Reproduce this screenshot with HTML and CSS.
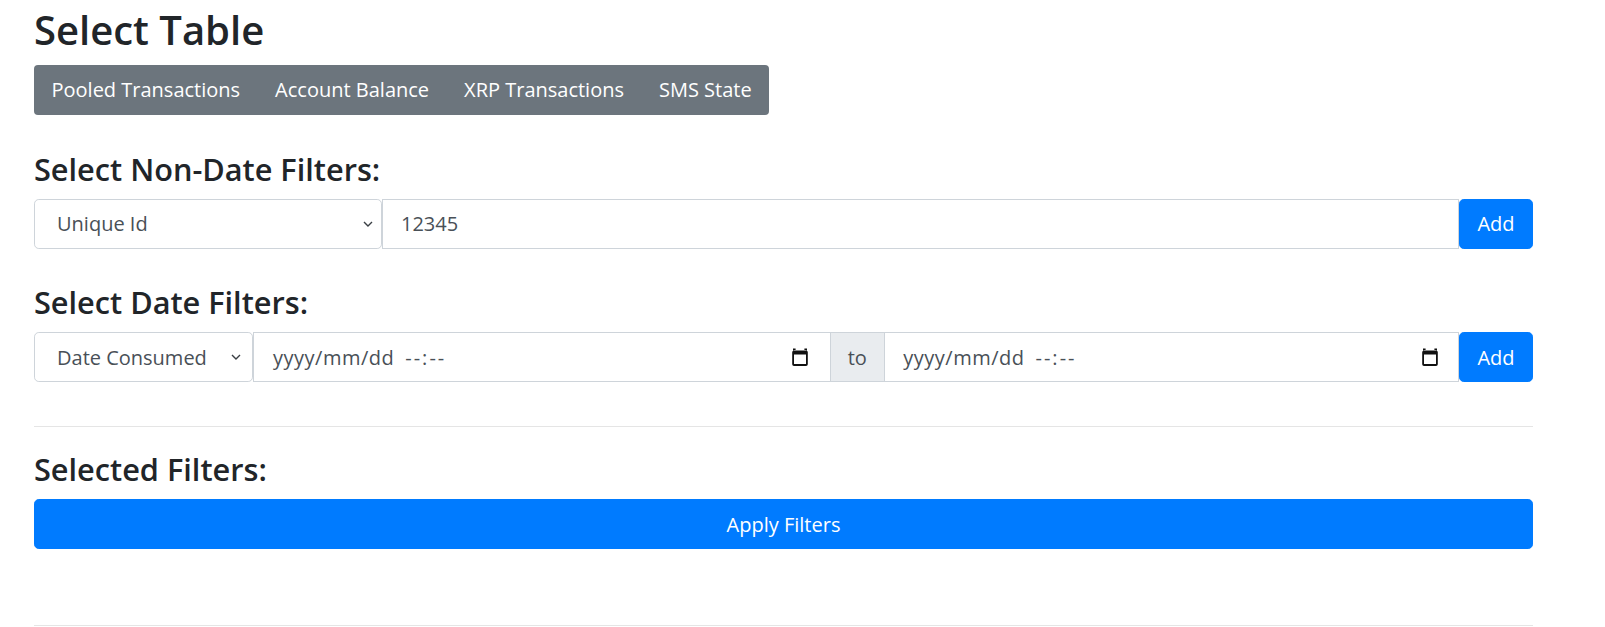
FILE: index.html
```html
<!DOCTYPE html>
<html lang="en">
<head>
<meta charset="utf-8">
<title>Select Table</title>
<link rel="stylesheet" href="styles.css">
</head>
<body>
<div class="page">
  <h1 class="title">Select Table</h1>
  <ul class="table-nav">
    <li><a href="#">Pooled Transactions</a></li>
    <li><a href="#">Account Balance</a></li>
    <li><a href="#">XRP Transactions</a></li>
    <li><a href="#">SMS State</a></li>
  </ul>

  <h3 class="section-title">Select Non-Date Filters:</h3>
  <div class="filter-row">
    <div class="select-wrap select-wide">
      <select class="form-select">
        <option>Unique Id</option>
      </select>
      <svg class="chev" width="10" height="6" viewBox="0 0 10 6"><path d="M1 1l4 4 4-4" fill="none" stroke="#3a3f44" stroke-width="1.4"/></svg>
    </div>
    <input class="text-input" type="text" value="12345">
    <button class="btn-add" type="button">Add</button>
  </div>

  <h3 class="section-title">Select Date Filters:</h3>
  <div class="filter-row">
    <div class="select-wrap select-narrow">
      <select class="form-select">
        <option>Date Consumed</option>
      </select>
      <svg class="chev" width="10" height="6" viewBox="0 0 10 6"><path d="M1 1l4 4 4-4" fill="none" stroke="#3a3f44" stroke-width="1.4"/></svg>
    </div>
    <div class="date-input date-first">
      <span class="date-text"><span class="date-part">yyyy/mm/dd</span><span class="time-part">--:--</span></span>
      <svg class="cal" width="16" height="18" viewBox="0 0 16 18"><path fill-rule="evenodd" d="M2 2.5h12a1.8 1.8 0 0 1 1.8 1.8v11.9a1.8 1.8 0 0 1-1.8 1.8H2a1.8 1.8 0 0 1-1.8-1.8V4.3A1.8 1.8 0 0 1 2 2.5zM2 6.6v9.4h12V6.6z M1 0.6h2.6v2.4H1z M12.4 0.6H15v2.4h-2.6z" fill="#111"/></svg>
    </div>
    <span class="addon">to</span>
    <div class="date-input date-second">
      <span class="date-text"><span class="date-part">yyyy/mm/dd</span><span class="time-part">--:--</span></span>
      <svg class="cal" width="16" height="18" viewBox="0 0 16 18"><path fill-rule="evenodd" d="M2 2.5h12a1.8 1.8 0 0 1 1.8 1.8v11.9a1.8 1.8 0 0 1-1.8 1.8H2a1.8 1.8 0 0 1-1.8-1.8V4.3A1.8 1.8 0 0 1 2 2.5zM2 6.6v9.4h12V6.6z M1 0.6h2.6v2.4H1z M12.4 0.6H15v2.4h-2.6z" fill="#111"/></svg>
    </div>
    <button class="btn-add" type="button">Add</button>
  </div>

  <hr class="divider divider-top">

  <h3 class="section-title section-after-rule">Selected Filters:</h3>
  <button class="btn-apply" type="button">Apply Filters</button>

  <hr class="divider divider-bottom">
</div>
</body>
</html>
```

FILE: styles.css
```css
* {
  box-sizing: border-box;
}

body {
  margin: 0;
  background: #fff;
  color: #212529;
  font-family: "Open Sans", "Noto Sans", sans-serif;
}

.page {
  margin-left: 34px;
  width: 1499px;
  padding-top: 6px;
}

.title {
  margin: 0 0 11px;
  font-size: 40px;
  line-height: 48px;
  font-weight: 600;
}

.table-nav {
  display: flex;
  width: max-content;
  height: 50px;
  margin: 0;
  padding: 0;
  list-style: none;
  background: #6c757d;
  border-radius: 4px;
}

.table-nav a {
  display: block;
  padding: 0 17.5px;
  line-height: 50px;
  font-size: 20px;
  color: #fff;
  text-decoration: none;
}

.section-title {
  margin: 35.5px 0 12px;
  font-size: 30.7px;
  line-height: 36px;
  font-weight: 600;
}

.section-after-rule {
  margin-top: 24.5px;
}

.filter-row {
  display: flex;
  height: 50px;
}

.select-wrap {
  position: relative;
  flex: none;
  height: 50px;
}

.select-wide {
  width: 348px;
}

.select-narrow {
  width: 219px;
}

.form-select {
  appearance: none;
  -webkit-appearance: none;
  width: 100%;
  height: 50px;
  margin: 0;
  padding: 0 0 0 22px;
  border: 1px solid #ced4da;
  border-radius: 4.8px;
  background: #fff;
  font-family: inherit;
  font-size: 20px;
  color: #495057;
}

.chev {
  position: absolute;
  right: 9px;
  top: 22px;
  pointer-events: none;
}

.select-narrow .chev {
  right: 12px;
}

.text-input {
  flex: 1;
  min-width: 0;
  height: 50px;
  margin: 0;
  padding: 0 18px;
  border: 1px solid #ced4da;
  border-radius: 0;
  font-family: inherit;
  font-size: 20px;
  color: #495057;
  outline: none;
}

.date-input {
  flex: 1;
  display: flex;
  align-items: center;
  justify-content: space-between;
  height: 50px;
  padding: 0 22px 0 19px;
  border: 1px solid #ced4da;
  background: #fff;
  font-size: 20px;
  color: #495057;
}

.date-second {
  border-left: 0;
  padding-left: 18.5px;
  padding-right: 20px;
}

.date-text {
  display: flex;
  white-space: nowrap;
}

.date-part {
  letter-spacing: 0.5px;
}

.time-part {
  margin-left: 11px;
  letter-spacing: 2px;
}

.cal {
  flex: none;
}

.addon {
  flex: none;
  width: 54px;
  display: flex;
  align-items: center;
  justify-content: center;
  height: 50px;
  background: #e9ecef;
  border: 1px solid #ced4da;
  border-left: 0;
  font-size: 20px;
  color: #495057;
}

.btn-add {
  flex: none;
  width: 74px;
  height: 50px;
  margin: 0;
  padding: 0;
  border: 1px solid #007bff;
  border-radius: 4.8px;
  background: #007bff;
  color: #fff;
  font-family: inherit;
  font-size: 20px;
}

.btn-apply {
  display: block;
  width: 100%;
  height: 50px;
  margin: 0;
  padding: 0;
  border: 1px solid #007bff;
  border-radius: 4.8px;
  background: #007bff;
  color: #fff;
  font-family: inherit;
  font-size: 20px;
}

.divider {
  height: 0;
  margin: 0;
  border: 0;
  border-top: 1px solid rgba(0, 0, 0, 0.1);
}

.divider-top {
  margin-top: 43.5px;
}

.divider-bottom {
  margin-top: 75.6px;
}
```
